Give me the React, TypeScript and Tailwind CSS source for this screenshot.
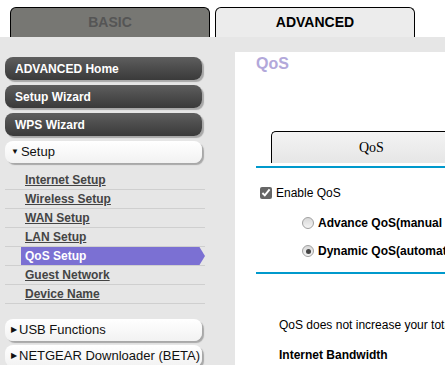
import React from "react";

const font = { fontFamily: '"Liberation Sans", Arial, sans-serif' };

function DarkBtn({ label }: { label: string }) {
  return (
    <div className="h-[23px] w-[197px] shrink-0 rounded-[8px] bg-gradient-to-b from-[#5e5e5e] to-[#3a3a3a] shadow-[2px_2px_1px_#a8a8a8] flex items-center pl-[10px] text-white font-bold text-[12px]">
      {label}
    </div>
  );
}

function WhiteBtn({ label, open }: { label: string; open?: boolean }) {
  return (
    <div className="h-[22px] w-[197px] shrink-0 rounded-[8px] bg-gradient-to-b from-white to-[#f2f2f2] shadow-[2px_2px_1px_#a8a8a8] flex items-center pl-[6px] text-[#111] text-[13px] whitespace-nowrap">
      <span className="text-[8px] mr-[2px] leading-none">{open ? "\u25BC" : "\u25B6"}</span>
      {label}
    </div>
  );
}

function SubItem({ label, active }: { label: string; active?: boolean }) {
  if (active) {
    return (
      <div className="h-[19px] shrink-0 flex items-stretch border-b border-[#cfcfcf]">
        <div className="w-[16px]" />
        <div
          className="flex-1 bg-[#7b70d3] flex items-center pl-[4px] text-white font-bold text-[12px]"
          style={{ clipPath: "polygon(0 0, 97% 0, 100% 50%, 97% 100%, 0 100%)" }}
        >
          {label}
        </div>
      </div>
    );
  }
  return (
    <div className="h-[19px] shrink-0 flex items-center border-b border-[#cfcfcf] pl-[20px]">
      <span className="text-[#444] font-bold underline text-[12px]">{label}</span>
    </div>
  );
}

function Radio({ checked }: { checked?: boolean }) {
  return (
    <span className="w-[12px] h-[12px] shrink-0 rounded-full border border-[#a0a0a0] bg-gradient-to-b from-[#d8d8d8] to-[#f4f4f4] flex items-center justify-center">
      {checked && <span className="w-[5px] h-[5px] rounded-full bg-[#444]" />}
    </span>
  );
}

export default function App() {
  return (
    <div className="w-[445px] h-[365px] overflow-hidden bg-[#e6e6e6]" style={font}>
      <div className="h-[37px] bg-white flex items-end pl-[10px] gap-[5px]">
        <div className="w-[200px] h-[30px] bg-[#777773] border border-b-0 border-black rounded-t-[6px] flex items-center justify-center text-[#555] font-bold text-[14px]">
          BASIC
        </div>
        <div className="w-[200px] h-[30px] bg-[#ececec] border border-b-0 border-black rounded-t-[6px] flex items-center justify-center text-black font-bold text-[14px]">
          ADVANCED
        </div>
      </div>
      <div className="flex h-[328px]">
        <div className="w-[235px] shrink-0 pt-[20px] pl-[5px] flex flex-col">
          <div className="flex flex-col gap-[5px]">
            <DarkBtn label="ADVANCED Home" />
            <DarkBtn label="Setup Wizard" />
            <DarkBtn label="WPS Wizard" />
            <WhiteBtn label="Setup" open />
          </div>
          <div className="w-[200px] mt-[8px] flex flex-col">
            <SubItem label="Internet Setup" />
            <SubItem label="Wireless Setup" />
            <SubItem label="WAN Setup" />
            <SubItem label="LAN Setup" />
            <SubItem label="QoS Setup" active />
            <SubItem label="Guest Network" />
            <SubItem label="Device Name" />
          </div>
          <div className="flex flex-col gap-[4px] mt-[15px]">
            <WhiteBtn label="USB Functions" />
            <WhiteBtn label="NETGEAR Downloader (BETA)" />
          </div>
        </div>
        <div className="flex-1 mt-[15px] bg-white pl-[21px] overflow-hidden">
          <div className="text-[#b2a8da] font-bold text-[16px] pt-[2px] leading-[20px]">QoS</div>
          <div
            className="mt-[57px] ml-[15px] h-[32px] border-l border-t border-black rounded-tl-[5px] bg-gradient-to-b from-[#f3f3f3] to-[#e6e6e6] flex items-center pl-[87px] text-black text-[14px]"
            style={{ fontFamily: '"Liberation Serif", "Times New Roman", serif' }}
          >
            QoS
          </div>
          <div className="mt-[3px] h-[2px] bg-[#0099cc]" />
          <div className="mt-[17px] ml-[4px] flex items-center gap-[4px] text-[12px] text-black h-[16px]">
            <input type="checkbox" defaultChecked className="w-[12px] h-[12px] m-0 accent-[#666]" />
            <span>Enable QoS</span>
          </div>
          <div className="mt-[14px] ml-[46px] flex items-center gap-[4px] text-[12px] text-black font-bold whitespace-nowrap h-[16px]">
            <Radio />
            <span>Advance QoS(manual setup)</span>
          </div>
          <div className="mt-[12px] ml-[46px] flex items-center gap-[4px] text-[12px] text-black font-bold whitespace-nowrap h-[16px]">
            <Radio checked />
            <span>Dynamic QoS(automatic)</span>
          </div>
          <div className="mt-[13px] h-[2px] bg-[#0099cc]" />
          <div className="mt-[43px] ml-[23px] text-[12px] leading-[16px] text-black whitespace-nowrap">QoS does not increase your total</div>
          <div className="mt-[14px] ml-[23px] text-[12px] leading-[16px] text-black font-bold whitespace-nowrap">Internet Bandwidth</div>
        </div>
      </div>
    </div>
  );
}
